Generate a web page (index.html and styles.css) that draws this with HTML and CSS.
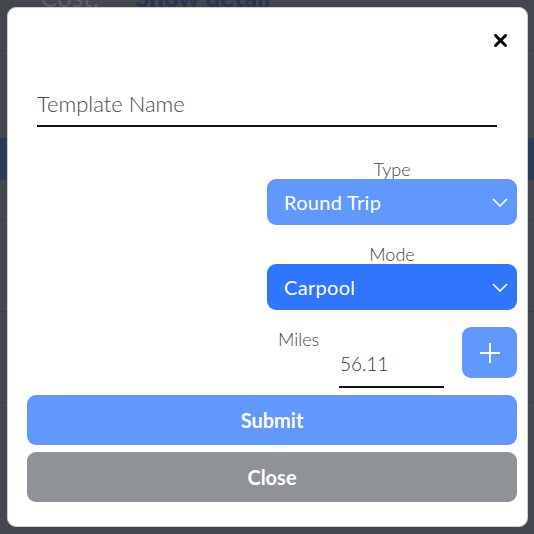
FILE: index.html
```html
<!DOCTYPE html>
<html lang="en">
<head>
    <meta charset="UTF-8">
    <meta name="viewport" content="width=device-width, initial-scale=1.0">
    <title>New Template</title>
    <link rel="stylesheet" href="styles.css">
</head>
<body>
    <div class="page">
        <div class="page-head">
            <span class="cost">Cost:</span>
            <span class="detail">Show detail</span>
        </div>
        <div class="page-row"></div>
        <div class="page-band"></div>
        <div class="page-row"></div>
        <div class="page-row"></div>
        <div class="page-row"></div>
    </div>

    <div class="modal">
        <div class="modal-top">
            <button class="close-x" aria-label="Close">
                <svg width="13" height="13" viewBox="0 0 13 13">
                    <path d="M1.5 1.5 L11.5 11.5 M11.5 1.5 L1.5 11.5" stroke="#000" stroke-width="3" stroke-linecap="square"/>
                </svg>
            </button>
        </div>

        <input class="name-input" type="text" placeholder="Template Name">

        <div class="fields">
            <div class="field-label">Type</div>
            <div class="select light">
                <span>Round Trip</span>
                <svg width="16" height="9" viewBox="0 0 16 9">
                    <path d="M1 1 L8 8 L15 1" fill="none" stroke="#fff" stroke-width="1.6"/>
                </svg>
            </div>

            <div class="field-label mode">Mode</div>
            <div class="select dark">
                <span>Carpool</span>
                <svg width="16" height="9" viewBox="0 0 16 9">
                    <path d="M1 1 L8 8 L15 1" fill="none" stroke="#fff" stroke-width="1.6"/>
                </svg>
            </div>

            <div class="miles-row">
                <div class="miles">
                    <div class="miles-label">Miles</div>
                    <input class="miles-input" type="text" value="56.11">
                </div>
                <button class="plus" aria-label="Add">
                    <svg width="20" height="20" viewBox="0 0 20 20">
                        <path d="M10 0 V20 M0 10 H20" stroke="#fff" stroke-width="2"/>
                    </svg>
                </button>
            </div>
        </div>

        <button class="btn submit">Submit</button>
        <button class="btn close">Close</button>
    </div>
</body>
</html>
```

FILE: styles.css
```css
body {
    margin: 0;
    height: 534px;
    background: #44474d;
    font-family: Lato, "Liberation Sans", sans-serif;
    position: relative;
    overflow: hidden;
}

/* page behind the overlay */
.page {
    display: flex;
    flex-direction: column;
}

.page-head {
    display: flex;
    gap: 36px;
    height: 10px;
    padding-left: 40px;
    line-height: 10px;
    font-size: 26px;
}

.cost {
    color: #5b5e64;
    margin-top: -8px;
}

.detail {
    color: #2b3654;
    font-weight: 900;
    margin-top: -8px;
}

.page-row {
    height: 50px;
    border-top: 1px solid #3c3f45;
    margin-top: 40px;
}

.page-band {
    height: 42px;
    background: #2b3a55;
    margin-top: 37px;
}

/* modal */
.modal {
    position: absolute;
    top: 7px;
    left: 7px;
    width: 521px;
    height: 520px;
    box-sizing: border-box;
    background: #fff;
    border: 1px solid #cfcfcf;
    border-radius: 9px;
    padding: 20px 10px 0 19px;
    display: flex;
    flex-direction: column;
}

.modal-top {
    height: 24px;
    display: flex;
    justify-content: flex-end;
    align-items: center;
    padding-right: 10px;
}

.close-x {
    background: none;
    border: none;
    padding: 0;
    display: flex;
    cursor: pointer;
}

.name-input {
    margin: 36px 20px 0 10px;
    height: 39px;
    box-sizing: border-box;
    padding: 0 0 7px 0;
    border: none;
    border-bottom: 2px solid #111;
    font-family: Lato, sans-serif;
    font-weight: 300;
    font-size: 22px;
    color: #444;
    outline: none;
}

.name-input::placeholder {
    color: #4a4a4a;
}

.fields {
    width: 250px;
    margin-left: auto;
    margin-top: 32px;
    display: flex;
    flex-direction: column;
}

.field-label {
    text-align: center;
    font-weight: 300;
    font-size: 18px;
    line-height: 20px;
    color: #444;
}

.field-label.mode {
    margin-top: 19px;
}

.select {
    height: 46px;
    border-radius: 9px;
    display: flex;
    align-items: center;
    justify-content: space-between;
    padding: 0 9px 0 17px;
    color: #fff;
    font-size: 20px;
    letter-spacing: 0.3px;
}

.select.light {
    background: #6198fd;
}

.select.dark {
    background: #2f76fc;
}

.miles-row {
    margin-top: 17px;
    display: flex;
    gap: 18px;
    align-items: flex-start;
}

.miles {
    flex: 1;
    display: flex;
    flex-direction: column;
}

.miles-label {
    padding: 2px 0 0 11px;
    font-weight: 300;
    font-size: 18px;
    line-height: 20px;
    color: #444;
}

.miles-input {
    margin: 1px 0 0 72px;
    width: 105px;
    height: 38px;
    box-sizing: border-box;
    padding: 0 0 10px 1px;
    border: none;
    border-bottom: 2px solid #111;
    font-family: Lato, sans-serif;
    font-weight: 300;
    font-size: 19px;
    color: #333;
    outline: none;
}

.plus {
    width: 55px;
    height: 51px;
    border: none;
    border-radius: 9px;
    background: #6198fd;
    display: flex;
    align-items: center;
    justify-content: center;
    cursor: pointer;
}

.btn {
    height: 50px;
    border: none;
    border-radius: 9px;
    color: #fff;
    font-family: Lato, sans-serif;
    font-weight: 700;
    font-size: 20px;
    cursor: pointer;
}

.submit {
    margin-top: 7px;
    background: #6198fd;
}

.close {
    margin-top: 7px;
    background: #8f9296;
}
```
